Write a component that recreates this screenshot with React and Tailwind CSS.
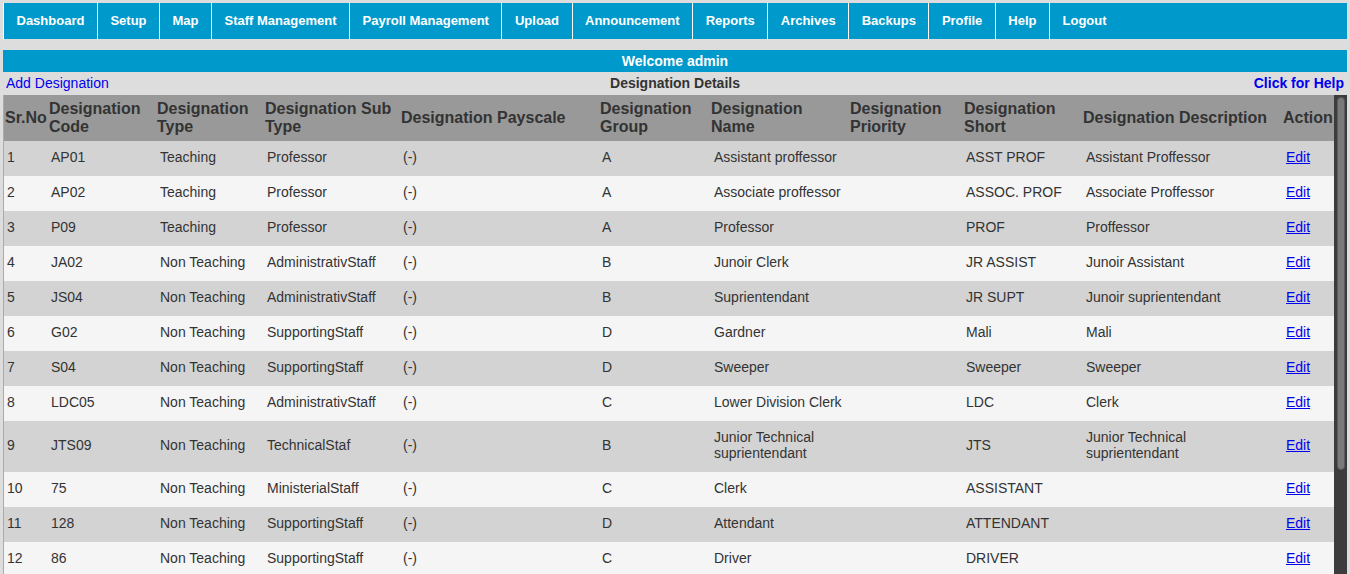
import { useState } from "react";

const menuItems = [
  "Dashboard",
  "Setup",
  "Map",
  "Staff Management",
  "Payroll Management",
  "Upload",
  "Announcement",
  "Reports",
  "Archives",
  "Backups",
  "Profile",
  "Help",
  "Logout",
];

const columns = [
  { label: "Sr.No", width: "w-[44px]" },
  { label: "Designation Code", width: "w-[108px]" },
  { label: "Designation Type", width: "w-[108px]" },
  { label: "Designation Sub Type", width: "w-[136px]" },
  { label: "Designation Payscale", width: "w-[199px]" },
  { label: "Designation Group", width: "w-[111px]" },
  { label: "Designation Name", width: "w-[139px]" },
  { label: "Designation Priority", width: "w-[114px]" },
  { label: "Designation Short", width: "w-[119px]" },
  { label: "Designation Description", width: "w-[200px]" },
  { label: "Action", width: "w-[52px]" },
];

const designations = [
  ["AP01", "Teaching", "Professor", "A", "Assistant proffessor", "ASST PROF", "Assistant Proffessor"],
  ["AP02", "Teaching", "Professor", "A", "Associate proffessor", "ASSOC. PROF", "Associate Proffessor"],
  ["P09", "Teaching", "Professor", "A", "Professor", "PROF", "Proffessor"],
  ["JA02", "Non Teaching", "AdministrativStaff", "B", "Junoir Clerk", "JR ASSIST", "Junoir Assistant"],
  ["JS04", "Non Teaching", "AdministrativStaff", "B", "Suprientendant", "JR SUPT", "Junoir suprientendant"],
  ["G02", "Non Teaching", "SupportingStaff", "D", "Gardner", "Mali", "Mali"],
  ["S04", "Non Teaching", "SupportingStaff", "D", "Sweeper", "Sweeper", "Sweeper"],
  ["LDC05", "Non Teaching", "AdministrativStaff", "C", "Lower Division Clerk", "LDC", "Clerk"],
  ["JTS09", "Non Teaching", "TechnicalStaf", "B", "Junior Technical suprientendant", "JTS", "Junior Technical suprientendant"],
  ["75", "Non Teaching", "MinisterialStaff", "C", "Clerk", "ASSISTANT", ""],
  ["128", "Non Teaching", "SupportingStaff", "D", "Attendant", "ATTENDANT", ""],
  ["86", "Non Teaching", "SupportingStaff", "C", "Driver", "DRIVER", ""],
];

const cell = "pb-[11px] pr-[2px] pt-[8px] align-middle text-[14px] leading-[16px]";

export default function App() {
  const [active, setActive] = useState("Setup");

  return (
    <div className="h-screen overflow-hidden bg-[#dddddd] px-[3px] pt-[3px] font-['Liberation_Sans',Arial,sans-serif] text-[#333]">
      {/* Top menu */}
      <nav className="flex h-[36px] bg-[#0099cc]">
        {menuItems.map((item) => (
          <a
            key={item}
            href="#"
            onClick={(e) => {
              e.preventDefault();
              setActive(item);
            }}
            className="flex items-center border-l border-white px-[12.5px] text-[13px] font-bold text-white"
          >
            {item}
          </a>
        ))}
      </nav>

      {/* Welcome bar */}
      <div className="mt-[11px] h-[22px] bg-[#0099cc] text-center text-[14px] font-bold leading-[22px] text-white">
        Welcome admin
      </div>

      {/* Title row */}
      <div className="grid h-[23px] grid-cols-[1fr_auto_1fr] px-[3px] pt-[3px] text-[14px] leading-[16px]">
        <a href="#" className="text-[#0000ee]">
          Add Designation
        </a>
        <span className="font-bold">Designation Details</span>
        <a href="#" className="text-right font-bold text-[#0000ee]">
          Click for Help
        </a>
      </div>

      {/* Table + scrollbar */}
      <div className="flex h-[479px] border-l border-[#aaaaaa]">
        <div className="w-[1330px] overflow-hidden">
          <table className="w-[1330px] table-fixed border-collapse">
            <colgroup>
              {columns.map((c) => (
                <col key={c.label} className={c.width} />
              ))}
            </colgroup>
            <thead>
              <tr className="bg-[#999999]">
                {columns.map((c) => (
                  <th
                    key={c.label}
                    className="px-[1px] py-[5px] text-left align-middle text-[16px] font-bold leading-[18px] text-[#333]"
                  >
                    {c.label}
                  </th>
                ))}
              </tr>
            </thead>
            <tbody>
              {designations.map((d, i) => (
                <tr
                  key={i}
                  className={i % 2 === 0 ? "bg-[#d3d3d3]" : "bg-[#f5f5f5]"}
                >
                  <td className={`${cell} pl-[3px]`}>{i + 1}</td>
                  <td className={`${cell} pl-[3px]`}>{d[0]}</td>
                  <td className={`${cell} pl-[4px]`}>{d[1]}</td>
                  <td className={`${cell} pl-[3px]`}>{d[2]}</td>
                  <td className={`${cell} pl-[3px]`}>(-)</td>
                  <td className={`${cell} pl-[3px]`}>{d[3]}</td>
                  <td className={`${cell} pl-[4px]`}>{d[4]}</td>
                  <td className={`${cell} pl-[4px]`}></td>
                  <td className={`${cell} pl-[3px]`}>{d[5]}</td>
                  <td className={`${cell} pl-[4px]`}>{d[6]}</td>
                  <td className={`${cell} pl-[4px]`}>
                    <a href="#" className="text-[#0000ee] underline">
                      Edit
                    </a>
                  </td>
                </tr>
              ))}
            </tbody>
          </table>
        </div>
        {/* scrollbar */}
        <div className="w-[13px] bg-[#3c3c3c] pt-[2px]">
          <div className="ml-[3px] h-[373px] w-[8px] rounded-full border border-[#5c5c5c] bg-[#7a7a7a]"></div>
        </div>
      </div>
    </div>
  );
}
